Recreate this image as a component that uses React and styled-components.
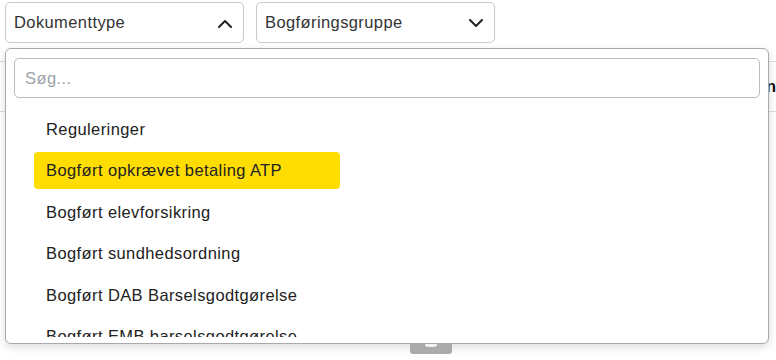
import styled, { createGlobalStyle } from 'styled-components';

const GlobalStyle = createGlobalStyle`
  html, body {
    margin: 0;
    padding: 0;
    background: #fff;
    font-family: "Liberation Sans", Arial, sans-serif;
    color: #222;
    overflow: hidden;
  }
`;

const items = [
  'Reguleringer',
  'Bogført opkrævet betaling ATP',
  'Bogført elevforsikring',
  'Bogført sundhedsordning',
  'Bogført DAB Barselsgodtgørelse',
  'Bogført EMB barselsgodtgørelse',
];

function Chevron({ up }) {
  return (
    <svg width="14" height="9" viewBox="0 0 14 9" fill="none">
      <polyline
        points={up ? '1,8 7,2 13,8' : '1,1 7,7 13,1'}
        stroke="#222"
        strokeWidth="2"
        strokeLinecap="round"
        strokeLinejoin="round"
      />
    </svg>
  );
}

export default function App() {
  return (
    <Page>
      <GlobalStyle />
      <Toolbar>
        <Select>
          <span>Dokumenttype</span>
          <Chevron up />
        </Select>
        <Select>
          <span>Bogføringsgruppe</span>
          <Chevron />
        </Select>
      </Toolbar>

      <TableHead>
        <HeadCell>Kontonummer</HeadCell>
      </TableHead>

      <Popup>
        <Search placeholder="Søg..." />
        <List>
          {items.map((name, i) => (
            <Item key={name} active={i === 1}>{name}</Item>
          ))}
        </List>
        <Handle />
      </Popup>
    </Page>
  );
}

const Page = styled.div`
  position: relative;
  width: 776px;
  height: 360px;
  overflow: hidden;
`;

const Toolbar = styled.div`
  display: flex;
  gap: 12px;
  padding: 2px 5px 0;
`;

const Select = styled.div`
  box-sizing: border-box;
  width: 239px;
  height: 41px;
  display: flex;
  align-items: center;
  justify-content: space-between;
  padding: 0 11px 0 8px;
  border: 1px solid #c9c9c9;
  border-radius: 5px;
  font-size: 16.5px;
  letter-spacing: 0.4px;
  color: #333;

  svg {
    margin-top: 1px;
  }
`;

const TableHead = styled.div`
  margin-top: 18px;
  height: 49px;
  display: flex;
  align-items: center;
  border-top: 1px solid #dcdcdc;
  border-bottom: 1px solid #dcdcdc;
`;

const HeadCell = styled.div`
  padding-left: 744px;
  font-size: 16.5px;
  font-weight: bold;
  color: #111;
  white-space: nowrap;
`;

const Popup = styled.div`
  position: absolute;
  top: 48px;
  left: 5px;
  box-sizing: border-box;
  width: 764px;
  height: 296px;
  background: #fff;
  border: 1px solid #a9a9a9;
  border-radius: 6px;
  box-shadow: 0 3px 8px rgba(0, 0, 0, 0.14);
  padding: 9px 8px 6px 8px;
  display: flex;
  flex-direction: column;
`;

const Search = styled.input`
  box-sizing: border-box;
  width: 100%;
  height: 40px;
  flex-shrink: 0;
  border: 1px solid #bdbdbd;
  border-radius: 5px;
  padding: 0 10px;
  font-family: inherit;
  font-size: 16.5px;
  letter-spacing: 0.4px;
  color: #333;
  outline: none;

  &::placeholder {
    color: #9ba1a9;
  }
`;

const List = styled.ul`
  list-style: none;
  margin: 13px 0 0;
  padding: 0 0 0 20px;
  overflow: hidden;
  flex: 1;
  display: flex;
  flex-direction: column;
  gap: 4.4px;
`;

const Item = styled.li`
  box-sizing: border-box;
  width: 306px;
  height: 37px;
  flex-shrink: 0;
  display: flex;
  align-items: center;
  padding: 0 12px;
  border-radius: 4px;
  font-size: 16.5px;
  letter-spacing: 0.4px;
  color: #222;
  white-space: nowrap;
  background: ${p => (p.active ? '#ffdd00' : 'transparent')};
`;

const Handle = styled.div`
  position: absolute;
  left: 404px;
  bottom: -11px;
  width: 42px;
  height: 10px;
  background: #ababab;
  border-radius: 0 0 3px 3px;

  &::after {
    content: '';
    position: absolute;
    left: 15px;
    top: 0;
    width: 12px;
    height: 3px;
    background: #f2f2f2;
    border-radius: 0 0 3px 3px;
  }
`;
